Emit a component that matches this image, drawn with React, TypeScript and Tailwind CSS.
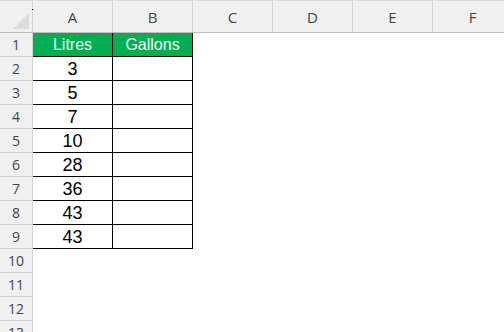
const cols = ['A', 'B', 'C', 'D', 'E', 'F']
const rows = [1, 2, 3, 4, 5, 6, 7, 8, 9, 10, 11, 12, 13]
const litres = ['3', '5', '7', '10', '28', '36', '43', '43']

function RowHeader({ n }: { n: number }) {
  return (
    <div className="w-[33px] h-[24px] shrink-0 flex items-center justify-center bg-[#f0f0f0] border-r border-b border-[#d4d4d4] text-[14px] text-[#444] font-['Open_Sans',sans-serif]">
      {n}
    </div>
  )
}

export default function App() {
  return (
    <div className="w-[504px] h-[332px] overflow-hidden bg-white font-['Liberation_Sans',Arial,sans-serif]">
      {/* column headers */}
      <div className="flex h-[33px] bg-[#f0f0f0] border-t border-[#dadada] border-b border-b-[#bdbdbd]">
        <div className="relative w-[33px] shrink-0 border-r border-[#d4d4d4]">
          <div className="absolute right-[3px] bottom-[3px] w-0 h-0 border-l-[16px] border-l-transparent border-b-[16px] border-b-[#dcdcdc]" />
          <div className="absolute right-[-1px] top-[8px] w-[1px] h-[1px] bg-black" />
        </div>
        {cols.map((c) => (
          <div
            key={c}
            className="w-[80px] shrink-0 flex items-center justify-center pt-[2px] border-r border-[#d4d4d4] text-[15px] text-[#444] font-['Open_Sans',sans-serif]"
          >
            {c}
          </div>
        ))}
      </div>

      {/* body rows */}
      {rows.map((r) => (
        <div key={r} className="flex">
          <RowHeader n={r} />
          {r === 1 ? (
            <>
              <div className="w-[80px] h-[24px] shrink-0 flex items-center justify-center bg-[#00b050] text-white text-[16px] border-r border-b border-black">
                Litres
              </div>
              <div className="w-[80px] h-[24px] shrink-0 flex items-center justify-center bg-[#00b050] text-white text-[16px] border-r border-b border-black">
                Gallons
              </div>
            </>
          ) : r <= 9 ? (
            <>
              <div className="w-[80px] h-[24px] shrink-0 flex items-center justify-center pt-[1px] text-[18px] text-black border-r border-b border-black">
                {litres[r - 2]}
              </div>
              <div className="w-[80px] h-[24px] shrink-0 border-r border-b border-black" />
            </>
          ) : null}
        </div>
      ))}
    </div>
  )
}
